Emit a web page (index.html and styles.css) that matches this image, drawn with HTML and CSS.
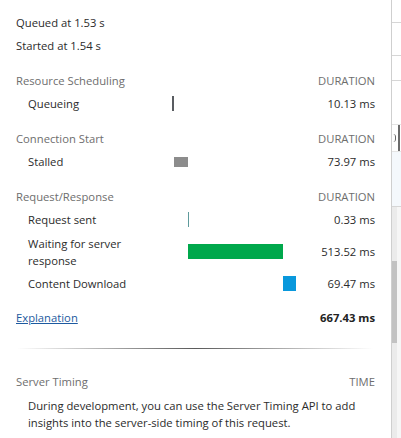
FILE: index.html
```html
<!DOCTYPE html>
<html>
<head>
<meta charset="utf-8">
<link rel="stylesheet" href="styles.css">
</head>
<body>
<div class="page">
  <div class="panel">
    <div class="info">Queued at 1.53 s</div>
    <div class="info">Started at 1.54 s</div>

    <div class="grid section">
      <div class="hdr-label">Resource Scheduling</div>
      <div class="hdr-dur">DURATION</div>
      <div class="label">Queueing</div>
      <div class="track"><span class="bar queueing" style="margin-left:0px;width:2px"></span></div>
      <div class="dur">10.13 ms</div>
    </div>

    <div class="grid section">
      <div class="hdr-label">Connection Start</div>
      <div class="hdr-dur">DURATION</div>
      <div class="label">Stalled</div>
      <div class="track"><span class="bar stalled" style="margin-left:2px;width:14px"></span></div>
      <div class="dur">73.97 ms</div>
    </div>

    <div class="grid section">
      <div class="hdr-label">Request/Response</div>
      <div class="hdr-dur">DURATION</div>
      <div class="label">Request sent</div>
      <div class="track"><span class="bar sending" style="margin-left:16px;width:1px"></span></div>
      <div class="dur">0.33 ms</div>
      <div class="label tall"><span class="wrap">Waiting for server response</span></div>
      <div class="track"><span class="bar waiting" style="margin-left:16px;width:95px"></span></div>
      <div class="dur">513.52 ms</div>
      <div class="label">Content Download</div>
      <div class="track"><span class="bar download" style="margin-left:111px;width:13px"></span></div>
      <div class="dur">69.47 ms</div>
    </div>

    <div class="total-row">
      <a class="explain" href="#">Explanation</a>
      <span class="total">667.43 ms</span>
    </div>

    <div class="divider"></div>

    <div class="server-hdr">
      <span class="hdr-label">Server Timing</span>
      <span class="hdr-dur">TIME</span>
    </div>
    <p class="note">During development, you can use the Server Timing API to add insights into the server-side timing of this request.</p>
  </div>

  <div class="side">
    <div class="gap g1"></div>
    <div class="sline"></div>
    <div class="gap g2"></div>
    <div class="sline"></div>
    <div class="gap g3"></div>
    <div class="sline"></div>
    <div class="gap g4"></div>
    <div class="sbox"><span class="sarc"></span><span class="sbar"></span></div>
    <div class="gap g5 tint"></div>
    <div class="sline"></div>
    <div class="scroll">
      <div class="strack">
        <div class="sthumb"></div>
      </div>
      <div class="sright"></div>
    </div>
  </div>
</div>
</body>
</html>
```

FILE: styles.css
```css
html, body {
  margin: 0;
  padding: 0;
  background: #ffffff;
}

body {
  font-family: "Open Sans", "Noto Sans", "Liberation Sans", sans-serif;
  font-size: 11.25px;
  color: #2b2b2b;
  overflow: hidden;
}

.page {
  display: flex;
  width: 401px;
  height: 438px;
  overflow: hidden;
}

.panel {
  width: 359px;
  flex: 0 0 auto;
  padding: 11px 16px 0 16px;
  border-right: 1px solid #cfcfcf;
  box-shadow: 1px 0 2px rgba(0, 0, 0, 0.08);
}

.info {
  height: 23px;
  line-height: 23px;
  white-space: nowrap;
}

.grid {
  display: grid;
  grid-template-columns: 156px 124px 1fr;
  grid-auto-rows: minmax(23px, auto);
  align-items: center;
}

.section {
  margin-top: 12px;
}

.hdr-label {
  grid-column: 1 / 3;
  color: #6e6e6e;
  white-space: nowrap;
}

.hdr-dur {
  text-align: right;
  color: #6e6e6e;
}

.label {
  padding-left: 12px;
  line-height: 17px;
}

.label.tall {
  height: 41px;
  display: flex;
  align-items: center;
}

.wrap {
  display: block;
  max-width: 120px;
}

.track {
  display: flex;
  align-items: center;
  height: 15px;
}

.bar {
  display: block;
  height: 15px;
}

.queueing { background: #595c61; }
.stalled { background: #8c8c8c; height: 10px; }
.sending { background: #5e9a9c; }
.waiting { background: #00a84c; }
.download { background: #0998dc; }

.dur {
  text-align: right;
  white-space: nowrap;
}

.total-row {
  display: flex;
  justify-content: space-between;
  align-items: center;
  height: 23px;
  margin-top: 11px;
}

.explain {
  color: #1d5aa0;
  text-decoration: underline;
}

.total {
  font-weight: 700;
  color: #222;
}

.divider {
  height: 1px;
  margin: 19px 2px 0 1px;
  background: linear-gradient(to right, rgba(100,100,100,0) 0%, #5a5a5a 50%, rgba(100,100,100,0) 100%);
}

.server-hdr {
  display: flex;
  justify-content: space-between;
  align-items: center;
  height: 23px;
  margin-top: 21px;
}

.note {
  margin: 4px 0 0 12px;
  line-height: 17px;
}

/* right-hand strip behind the popover */
.side {
  flex: 1 1 auto;
  display: flex;
  flex-direction: column;
  background: #ffffff;
}

.gap { flex: 0 0 auto; }
.g1 { height: 22px; }
.g2 { height: 32px; }
.g3 { height: 24px; }
.g4 { height: 43px; }
.g5 { height: 54px; }
.tint { background: #f4f8fc; }

.sline {
  height: 1px;
  background: #d6d6d6;
}

.sbox {
  height: 26px;
  display: flex;
  align-items: stretch;
  justify-content: space-between;
  border-top: 1px solid #e4e4e4;
  border-bottom: 1px solid #e4e4e4;
  overflow: hidden;
}

.sarc {
  width: 3px;
  height: 8px;
  margin-top: 9px;
  border-right: 1px solid #666;
  border-radius: 0 3px 3px 0;
}

.sbar {
  width: 2px;
  margin-right: 1px;
  background: #6b6b6b;
}

.scroll {
  flex: 1 1 auto;
  display: flex;
}

.strack {
  width: 5px;
  background: #ebebeb;
  padding-top: 54px;
}

.sthumb {
  height: 82px;
  background: #c2c2c2;
}

.sright {
  flex: 1 1 auto;
  background: #f6f6f6;
}
```
